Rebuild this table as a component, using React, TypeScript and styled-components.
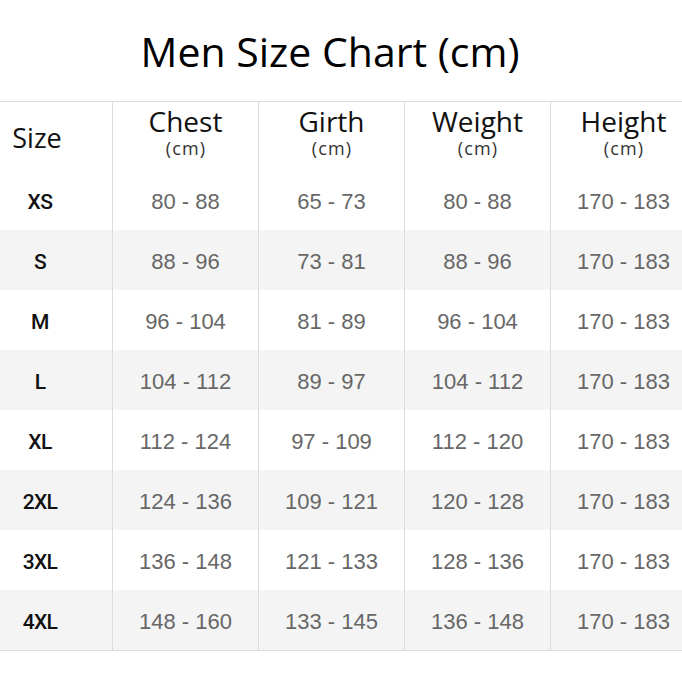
import React from "react";
import styled, { createGlobalStyle } from "styled-components";

const Global = createGlobalStyle`
  html, body { margin: 0; padding: 0; background: #fff; }
  body { width: 682px; height: 682px; overflow: hidden; }
`;

const Page = styled.div`
  width: 682px;
  height: 682px;
  overflow: hidden;
  background: #fff;
`;

const Title = styled.h1`
  margin: 0;
  height: 101px;
  display: flex;
  align-items: center;
  justify-content: center;
  padding-right: 22px;
  padding-top: 1px;
  box-sizing: border-box;
  font-family: "Open Sans", sans-serif;
  font-weight: 400;
  font-size: 41px;
  color: #000;
`;

const Table = styled.div`
  display: grid;
  grid-template-columns: 112px repeat(4, 146px);
  width: 696px;
  border-top: 1px solid #dcdcdc;
  border-bottom: 1px solid #dcdcdc;
`;

const HeadCell = styled.div<{ $first?: boolean }>`
  height: 68px;
  display: flex;
  flex-direction: column;
  align-items: center;
  justify-content: ${(p) => (p.$first ? "center" : "flex-start")};
  padding-right: ${(p) => (p.$first ? "38px" : "0")};
  border-left: ${(p) => (p.$first ? "none" : "1px solid #dcdcdc")};
  font-family: "Open Sans", sans-serif;
  color: #111;
  box-sizing: border-box;
`;

const HeadName = styled.span<{ $first?: boolean }>`
  display: block;
  font-size: ${(p) => (p.$first ? "27px" : "28px")};
  line-height: 30px;
  margin-top: 4px;
`;

const Unit = styled.span`
  display: block;
  margin-top: 2px;
  font-size: 18px;
  line-height: 21px;
  color: #333;
  letter-spacing: 1.2px;
  padding-left: 1px;
`;

const Cell = styled.div<{ $alt: boolean; $first?: boolean }>`
  height: 60px;
  display: flex;
  align-items: center;
  justify-content: center;
  background: ${(p) => (p.$alt ? "#f4f4f4" : "#fff")};
  border-left: ${(p) => (p.$first ? "none" : "1px solid #dcdcdc")};
  padding-right: ${(p) => (p.$first ? "32px" : "0")};
  padding-top: 3px;
  box-sizing: border-box;
  font-family: ${(p) =>
    p.$first ? "Roboto, 'Liberation Sans', sans-serif" : "'Liberation Sans', Arial, sans-serif"};
  font-size: ${(p) => (p.$first ? "21px" : "22px")};
  font-weight: ${(p) => (p.$first ? 500 : 400)};
  letter-spacing: ${(p) => (p.$first ? "-0.6px" : "0")};
  color: ${(p) => (p.$first ? "#111" : "#676767")};
`;

const heads = ["Chest", "Girth", "Weight", "Height"];

const rows: [string, string, string, string, string][] = [
  ["XS", "80 - 88", "65 - 73", "80 - 88", "170 - 183"],
  ["S", "88 - 96", "73 - 81", "88 - 96", "170 - 183"],
  ["M", "96 - 104", "81 - 89", "96 - 104", "170 - 183"],
  ["L", "104 - 112", "89 - 97", "104 - 112", "170 - 183"],
  ["XL", "112 - 124", "97 - 109", "112 - 120", "170 - 183"],
  ["2XL", "124 - 136", "109 - 121", "120 - 128", "170 - 183"],
  ["3XL", "136 - 148", "121 - 133", "128 - 136", "170 - 183"],
  ["4XL", "148 - 160", "133 - 145", "136 - 148", "170 - 183"],
];

export default function App() {
  return (
    <Page>
      <Global />
      <Title>Men Size Chart (cm)</Title>
      <Table>
        <HeadCell $first>
          <HeadName $first>Size</HeadName>
        </HeadCell>
        {heads.map((h) => (
          <HeadCell key={h}>
            <HeadName>{h}</HeadName>
            <Unit>(cm)</Unit>
          </HeadCell>
        ))}
        {rows.map((r, i) =>
          r.map((v, j) => (
            <Cell key={`${i}-${j}`} $alt={i % 2 === 1} $first={j === 0}>
              {v}
            </Cell>
          ))
        )}
      </Table>
    </Page>
  );
}
